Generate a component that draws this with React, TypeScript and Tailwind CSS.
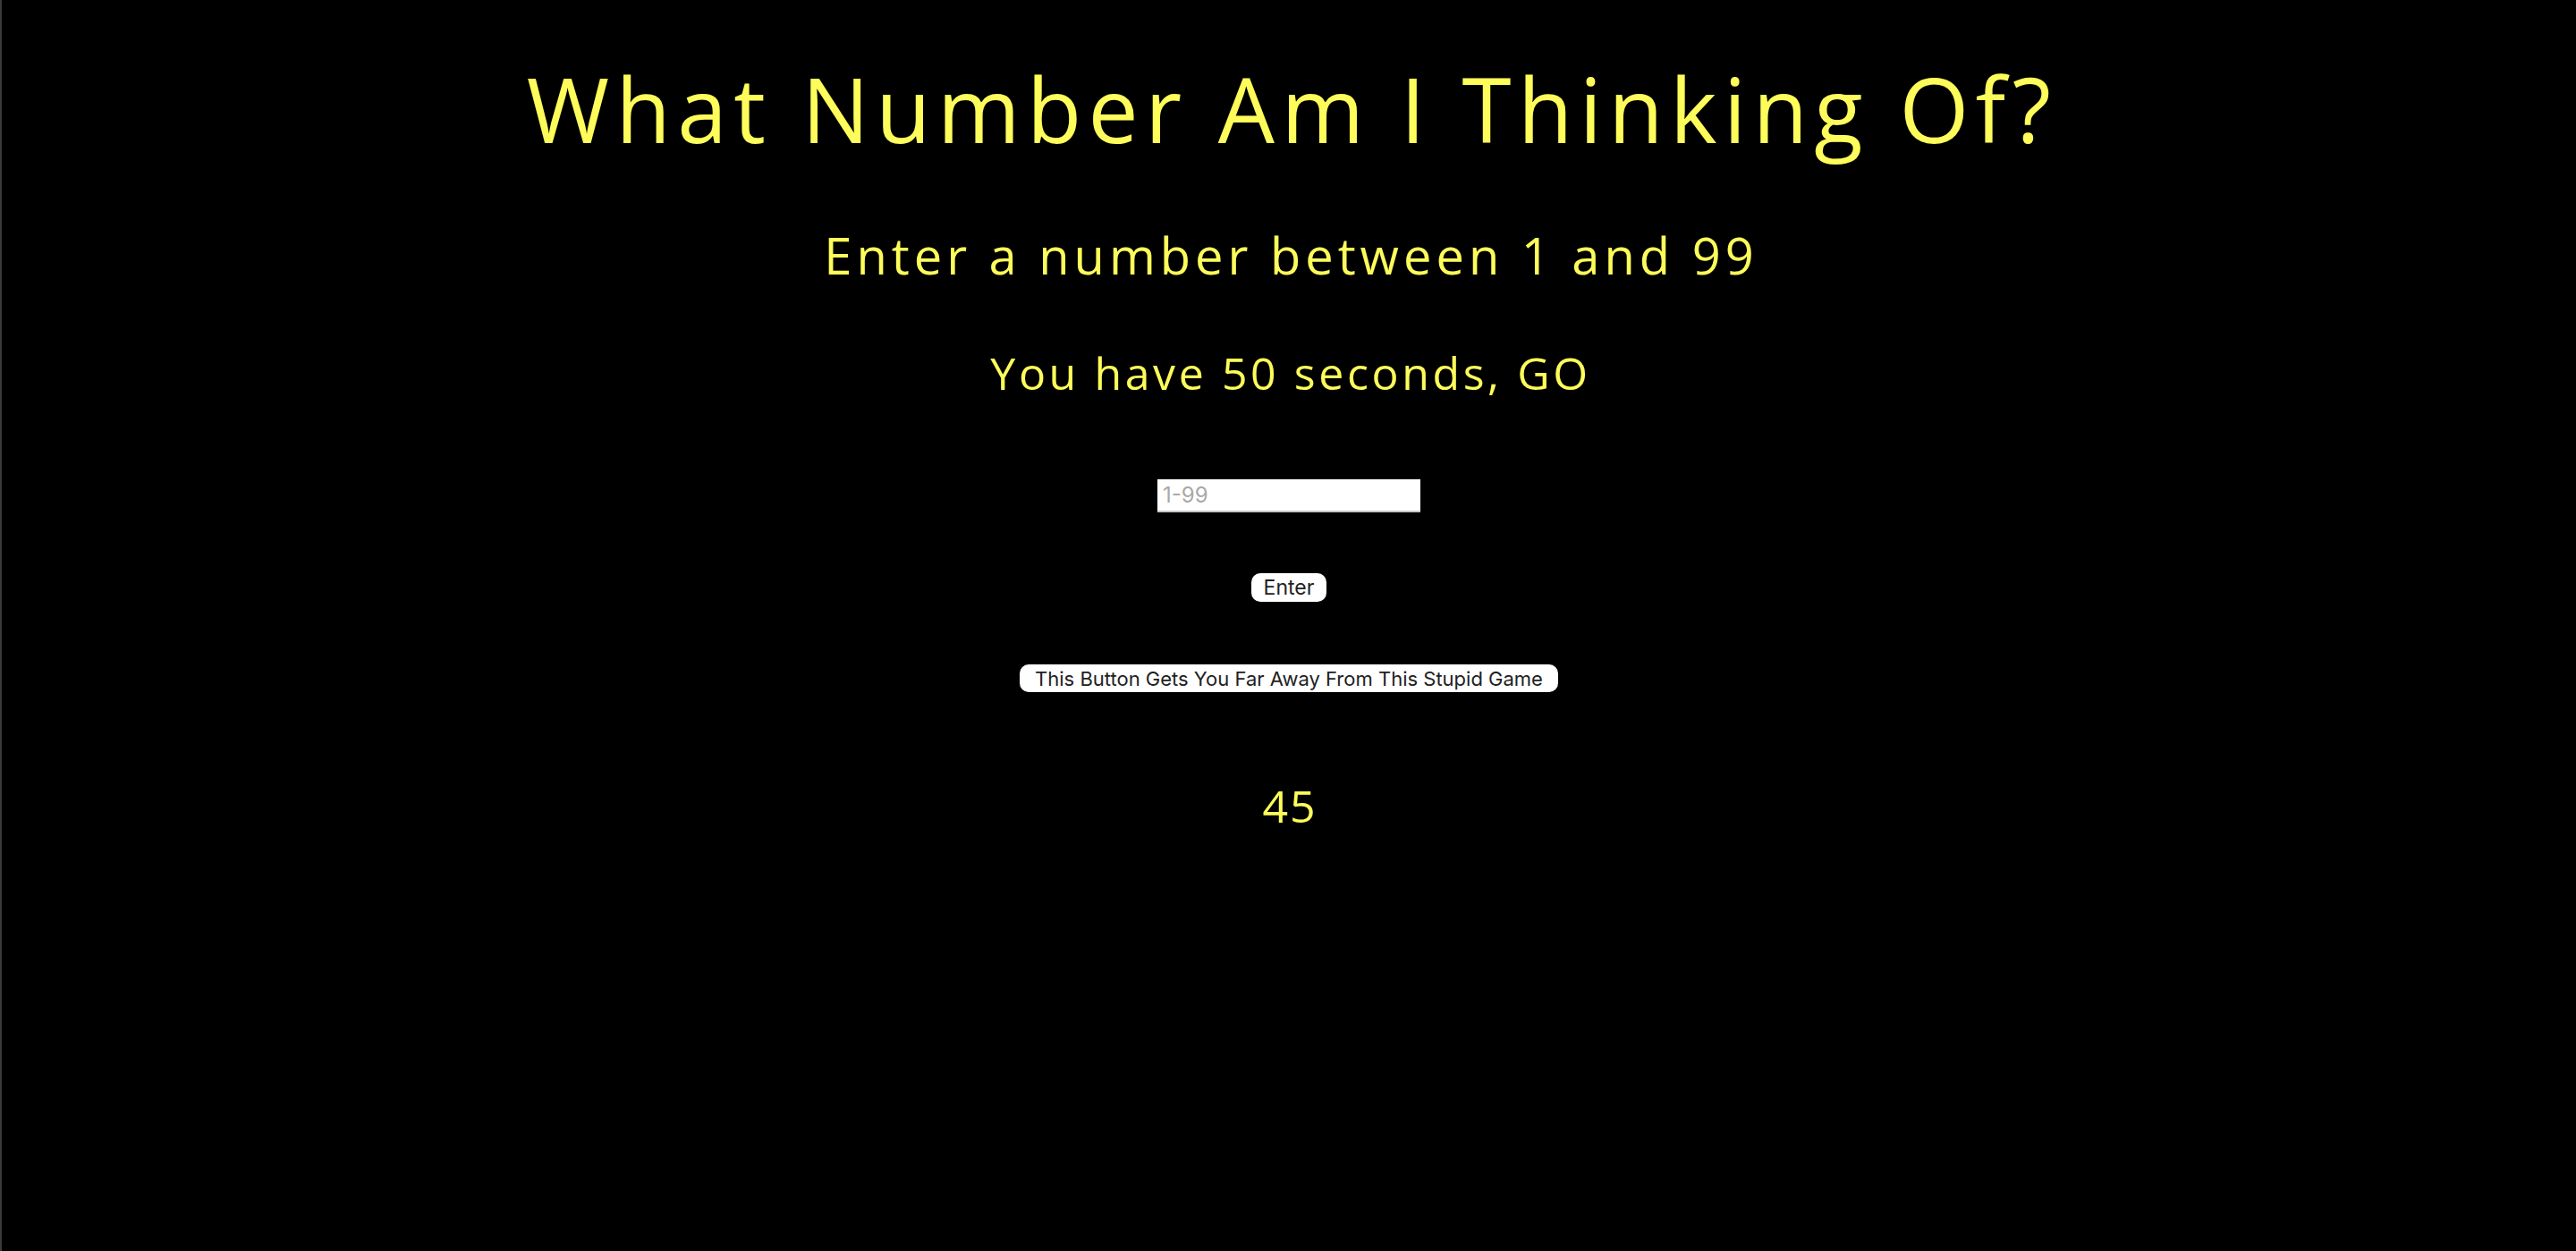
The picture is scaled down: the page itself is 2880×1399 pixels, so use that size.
import React from "react";

export default function App() {
  const yellow = "text-[#fdfc5a]";
  return (
    <div className="min-h-[1399px] w-full bg-black border-l-2 border-[#3a3a3a] flex flex-col items-center font-['Open_Sans',sans-serif]">
      <h1 className={`mt-[71px] pl-[7px] text-[100px] leading-[100px] tracking-[7.4px] font-normal ${yellow}`}>
        What Number Am I Thinking Of?
      </h1>
      <h2 className={`mt-[86px] pl-[5px] text-[56px] leading-[56px] tracking-[5px] font-normal ${yellow}`}>
        Enter a number between 1 and 99
      </h2>
      <h3 className={`mt-[79px] pl-[4px] text-[50px] leading-[50px] tracking-[3.6px] font-normal ${yellow}`}>
        You have 50 seconds, GO
      </h3>
      <input
        type="text"
        placeholder="1-99"
        className="mt-[94px] w-[294px] h-[37px] bg-white border-b-2 border-[#c8c8c8] px-[6px] text-[24px] font-['Inter',sans-serif] text-black placeholder:text-[#a9a9a9] outline-none"
      />
      <button className="mt-[68px] w-[84px] h-[32px] bg-white rounded-[10px] text-[23px] leading-none text-[#222] font-['Inter',sans-serif]">
        Enter
      </button>
      <button className="mt-[70px] h-[31px] px-[17px] bg-white rounded-[10px] text-[22px] leading-none text-[#222] font-['Inter',sans-serif]">
        This Button Gets You Far Away From This Stupid Game
      </button>
      <div className={`mt-[102px] pl-[2px] text-[50px] leading-[50px] tracking-[2px] ${yellow}`}>45</div>
    </div>
  );
}
